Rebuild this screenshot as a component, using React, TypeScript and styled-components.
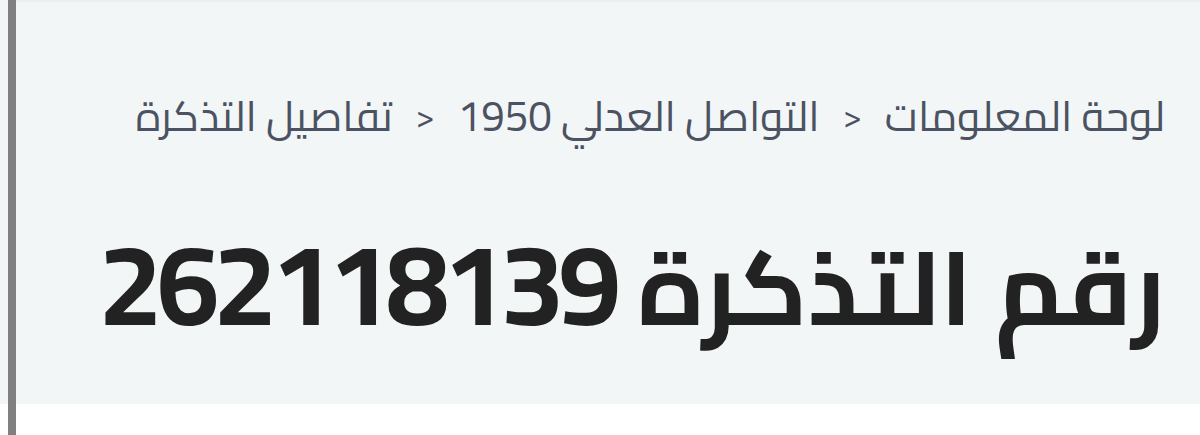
import React from 'react'
import styled, { createGlobalStyle } from 'styled-components'

const GlobalStyle = createGlobalStyle`
  html, body {
    margin: 0;
    padding: 0;
    background: #ffffff;
  }
  body {
    font-family: "Cairo", "Noto Sans", sans-serif;
  }
`

const Page = styled.div`
  display: flex;
  height: 435px;
  overflow: hidden;
  padding-left: 8px;
  background: linear-gradient(to bottom, #f3f6f6 404px, #ffffff 404px);
`

const Main = styled.div`
  flex: 1;
  min-width: 0;
  display: flex;
  flex-direction: column;
  border-left: 8px solid #808080;
`

const Header = styled.header`
  height: 404px;
  box-sizing: border-box;
  background: #f3f6f6;
  box-shadow: inset 0 3px 3px -2px rgba(0, 0, 0, 0.06);
  padding: 86px 35px 0 0;
  direction: rtl;
`

const Breadcrumb = styled.nav`
  display: flex;
  align-items: center;
  gap: 23px;
  font-size: 42px;
  font-weight: 400;
  line-height: 60px;
  color: #4b5262;
  white-space: nowrap;
`

const Crumb = styled.span``

const Separator = styled.span`
  font-size: 34px;
`

const Title = styled.h1`
  margin: 72px 0 0;
  font-size: 103px;
  font-weight: 700;
  line-height: 140px;
  color: #222222;
  white-space: nowrap;
`

const TicketNumber = styled.span`
  display: inline-block;
  direction: ltr;
  font-size: 114px;
  line-height: 112px;
  letter-spacing: -6px;
`

const crumbs = ['لوحة المعلومات', 'التواصل العدلي 1950', 'تفاصيل التذكرة']

const App: React.FC = () => {
  return (
    <>
      <GlobalStyle />
      <Page>
        <Main>
          <Header>
            <Breadcrumb>
              {crumbs.map((crumb, i) => (
                <React.Fragment key={crumb}>
                  {i > 0 && <Separator>&lt;</Separator>}
                  <Crumb>{crumb}</Crumb>
                </React.Fragment>
              ))}
            </Breadcrumb>
            <Title>
              رقم التذكرة <TicketNumber>262118139</TicketNumber>
            </Title>
          </Header>
        </Main>
      </Page>
    </>
  )
}

export default App
